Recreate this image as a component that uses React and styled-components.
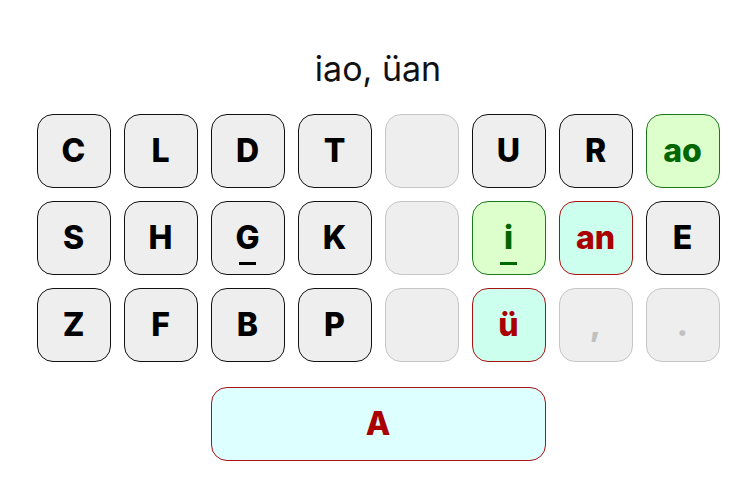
import React from 'react';
import styled, { createGlobalStyle } from 'styled-components';

const GlobalStyle = createGlobalStyle`
	html, body {
		margin: 0;
		padding: 0;
		background: #fff;
	}
	body {
		font-family: Inter, 'Liberation Sans', sans-serif;
	}
`;

const palette = {
	normal: { bg: '#eeeeee', border: '#111111', color: '#000000' },
	empty: { bg: '#eeeeee', border: '#c6c6c6', color: '#c0c0c0' },
	green: { bg: '#ddffcc', border: '#1b7a1b', color: '#006600' },
	red: { bg: '#ccffee', border: '#aa1111', color: '#aa0000' },
	space: { bg: '#ddffff', border: '#aa1111', color: '#aa0000' },
};

const rows = [
	[
		{ label: 'C' },
		{ label: 'L' },
		{ label: 'D' },
		{ label: 'T' },
		{ label: '', kind: 'empty' },
		{ label: 'U' },
		{ label: 'R' },
		{ label: 'ao', kind: 'green' },
	],
	[
		{ label: 'S' },
		{ label: 'H' },
		{ label: 'G', mark: true },
		{ label: 'K' },
		{ label: '', kind: 'empty' },
		{ label: 'i', kind: 'green', mark: true },
		{ label: 'an', kind: 'red' },
		{ label: 'E' },
	],
	[
		{ label: 'Z' },
		{ label: 'F' },
		{ label: 'B' },
		{ label: 'P' },
		{ label: '', kind: 'empty' },
		{ label: 'ü', kind: 'red' },
		{ label: ',', kind: 'empty' },
		{ label: '.', kind: 'empty' },
	],
];

const App = () => {
	return (
		<>
			<GlobalStyle />
			<Page>
				<Title>iao, üan</Title>
				<Keyboard>
					{rows.flat().map((key, i) => {
						const kind = key.kind || 'normal';
						return (
							<Key key={i} $kind={kind}>
								{key.label}
								{key.mark && <Mark $kind={kind} />}
							</Key>
						);
					})}
					<SpaceBar $kind='space'>A</SpaceBar>
				</Keyboard>
			</Page>
		</>
	);
};

const Page = styled.div`
	display: flex;
	flex-direction: column;
	align-items: center;
	width: 756px;
	height: 498px;
`;

const Title = styled.div`
	padding-top: 48px;
	font-size: 34px;
	line-height: 41px;
	color: #111;
	font-weight: 400;
`;

const Keyboard = styled.div`
	margin-top: 25px;
	display: grid;
	grid-template-columns: repeat(8, 74px);
	grid-template-rows: repeat(3, 74px) 86px;
	gap: 13px;
`;

const Key = styled.div`
	position: relative;
	box-sizing: border-box;
	height: 74px;
	display: flex;
	align-items: center;
	justify-content: center;
	border-radius: 16px;
	border: 1.4px solid ${({ $kind }) => palette[$kind].border};
	background: ${({ $kind }) => palette[$kind].bg};
	color: ${({ $kind }) => palette[$kind].color};
	font-size: 32px;
	font-weight: 800;
	line-height: 1;
`;

const Mark = styled.span`
	position: absolute;
	left: 50%;
	bottom: 9px;
	width: 17px;
	height: 3px;
	margin-left: -8.5px;
	background: ${({ $kind }) => palette[$kind].color};
`;

const SpaceBar = styled(Key)`
	grid-column: 3 / 7;
	align-self: end;
`;

export default App;
